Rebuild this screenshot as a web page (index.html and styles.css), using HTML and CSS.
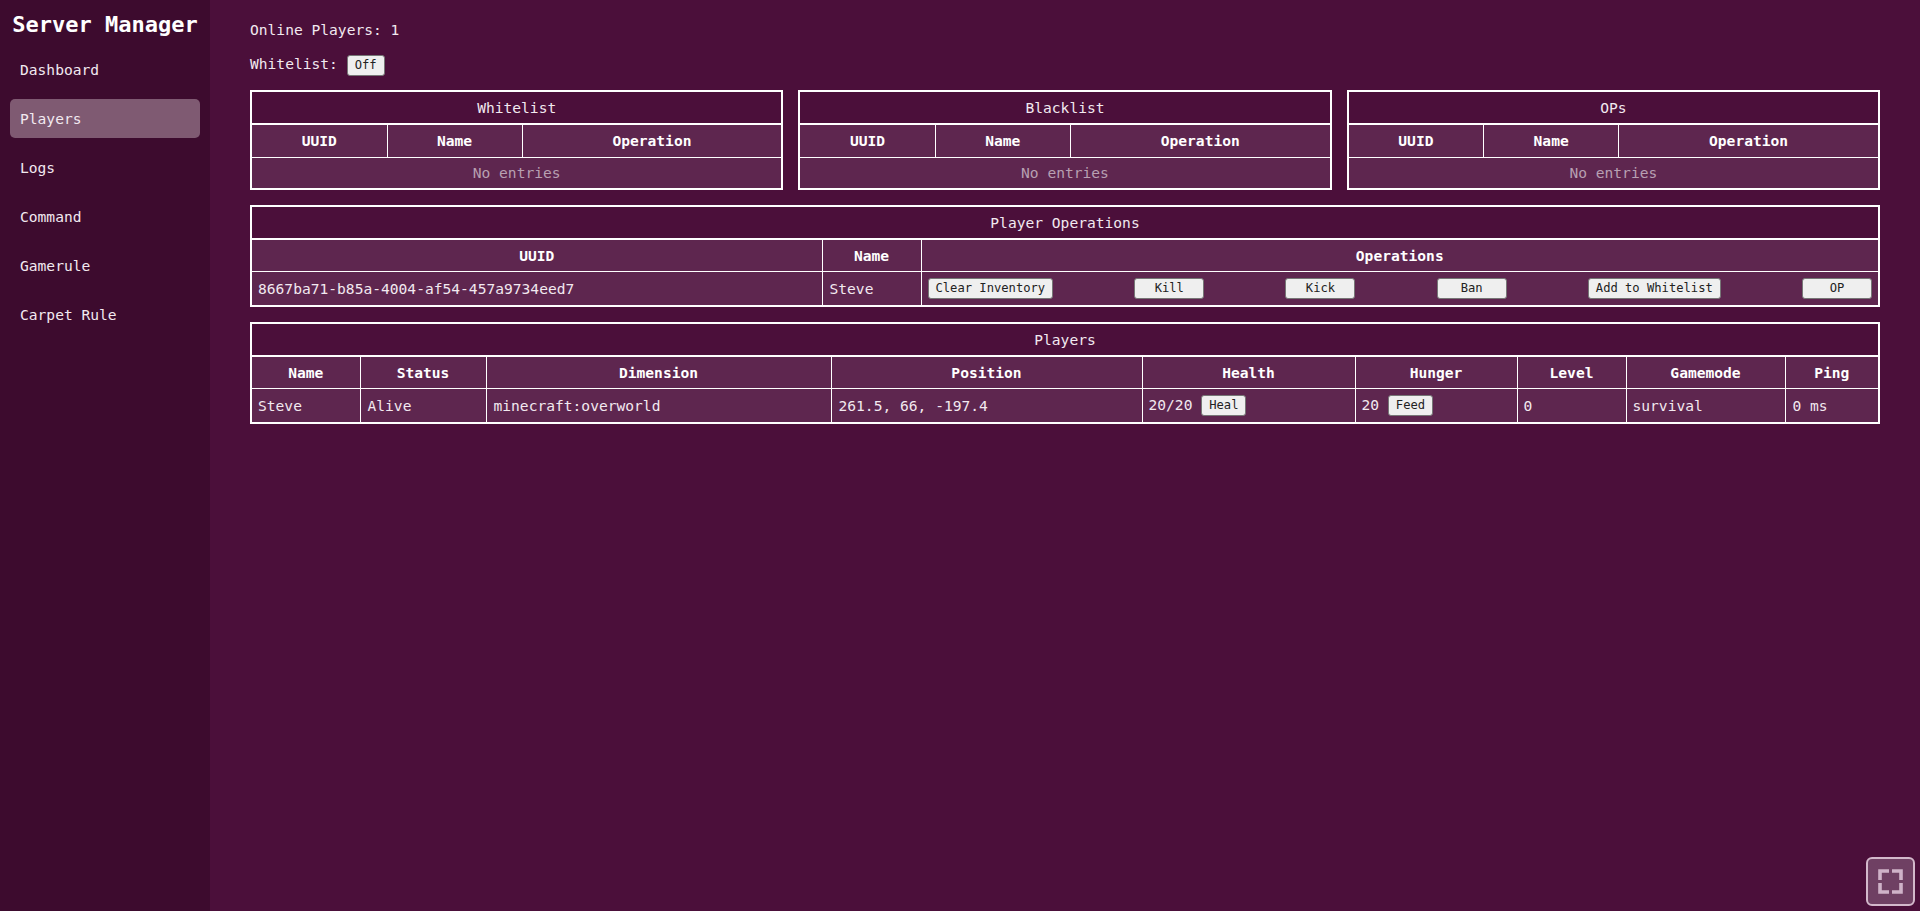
FILE: index.html
```html
<!DOCTYPE html>
<html lang="en">
<head>
<meta charset="utf-8">
<title>Server Manager</title>
<link rel="stylesheet" href="styles.css">
</head>
<body>
<aside class="sidebar">
  <h1 class="brand">Server Manager</h1>
  <nav class="nav">
    <a class="nav-item">Dashboard</a>
    <a class="nav-item active">Players</a>
    <a class="nav-item">Logs</a>
    <a class="nav-item">Command</a>
    <a class="nav-item">Gamerule</a>
    <a class="nav-item">Carpet Rule</a>
  </nav>
</aside>
<main class="main">
  <p class="line">Online Players: 1</p>
  <p class="line wl-line">Whitelist: <button class="btn">Off</button></p>
  <div class="triple">
    <table class="tbl">
      <colgroup><col class="c-uuid"><col class="c-name"><col></colgroup>
      <thead>
        <tr><th class="cap" colspan="3">Whitelist</th></tr>
        <tr><th>UUID</th><th>Name</th><th>Operation</th></tr>
      </thead>
      <tbody><tr><td class="empty" colspan="3">No entries</td></tr></tbody>
    </table>
    <table class="tbl">
      <colgroup><col class="c-uuid"><col class="c-name"><col></colgroup>
      <thead>
        <tr><th class="cap" colspan="3">Blacklist</th></tr>
        <tr><th>UUID</th><th>Name</th><th>Operation</th></tr>
      </thead>
      <tbody><tr><td class="empty" colspan="3">No entries</td></tr></tbody>
    </table>
    <table class="tbl">
      <colgroup><col class="c-uuid"><col class="c-name"><col></colgroup>
      <thead>
        <tr><th class="cap" colspan="3">OPs</th></tr>
        <tr><th>UUID</th><th>Name</th><th>Operation</th></tr>
      </thead>
      <tbody><tr><td class="empty" colspan="3">No entries</td></tr></tbody>
    </table>
  </div>
  <table class="tbl wide">
    <colgroup><col class="o-uuid"><col class="o-name"><col></colgroup>
    <thead>
      <tr><th class="cap" colspan="3">Player Operations</th></tr>
      <tr class="ops-head"><th>UUID</th><th>Name</th><th>Operations</th></tr>
    </thead>
    <tbody>
      <tr>
        <td>8667ba71-b85a-4004-af54-457a9734eed7</td>
        <td class="inner">Steve</td>
        <td class="ops-cell">
          <div class="ops">
            <button class="btn op">Clear Inventory</button>
            <button class="btn op">Kill</button>
            <button class="btn op">Kick</button>
            <button class="btn op">Ban</button>
            <button class="btn op">Add to Whitelist</button>
            <button class="btn op">OP</button>
          </div>
        </td>
      </tr>
    </tbody>
  </table>
  <table class="tbl wide">
    <colgroup><col class="p1"><col class="p2"><col class="p3"><col class="p4"><col class="p5"><col class="p6"><col class="p7"><col class="p8"><col></colgroup>
    <thead>
      <tr><th class="cap" colspan="9">Players</th></tr>
      <tr><th>Name</th><th>Status</th><th>Dimension</th><th>Position</th><th>Health</th><th>Hunger</th><th>Level</th><th>Gamemode</th><th>Ping</th></tr>
    </thead>
    <tbody>
      <tr class="player-row">
        <td>Steve</td>
        <td class="inner">Alive</td>
        <td class="inner">minecraft:overworld</td>
        <td class="inner">261.5, 66, -197.4</td>
        <td class="btn-cell">20/20 <button class="btn">Heal</button></td>
        <td class="btn-cell">20 <button class="btn">Feed</button></td>
        <td>0</td>
        <td>survival</td>
        <td class="inner">0 ms</td>
      </tr>
    </tbody>
  </table>
</main>
<button class="fullscreen" aria-label="Fullscreen">
  <svg class="fs-icon" viewBox="0 0 25 25" width="25" height="25" aria-hidden="true">
    <path d="M11 2H2V11M14 2H23V11M2 14V23H11M23 14V23H14" fill="none" stroke="currentColor" stroke-width="3.600"/>
  </svg>
</button>
</body>
</html>
```

FILE: styles.css
```css
* { box-sizing: border-box; }
html, body { height: 100%; }
body {
  margin: 0;
  display: flex;
  height: 911px;
  overflow: hidden;
  background: #4b0f3a;
  color: #f2e9f0;
  font-family: "DejaVu Sans Mono", "Liberation Mono", monospace;
  font-size: 14.6px;
  line-height: 19px;
}
.sidebar {
  flex: 0 0 210px;
  background: #3d0b2e;
  padding: 11px 10px 10px;
}
.brand {
  margin: 0 0 12px;
  font-size: 22px;
  line-height: 27px;
  font-weight: 700;
  color: #fff;
  text-align: center;
  white-space: nowrap;
}
.nav { display: flex; flex-direction: column; gap: 10px; }
.nav-item {
  display: block;
  padding: 10px;
  height: 39px;
  border-radius: 5px;
}
.nav-item.active { background: #7f5a72; }
.main {
  flex: 1;
  padding: 20px 40px;
  min-width: 0;
}
.line { margin: 0; }
.wl-line { margin: 14px 0 16px; height: 21px; line-height: 21px; white-space: pre; }
.btn {
  height: 21px;
  padding: 0 7px;
  font: 12.15px/19px "DejaVu Sans Mono", "Liberation Mono", monospace;
  color: #222;
  background: #efefef;
  border: 1px solid #767676;
  border-radius: 3px;
  vertical-align: middle;
}
.triple { display: flex; gap: 15px; margin-bottom: 15px; }
.tbl {
  width: 100%;
  table-layout: fixed;
  border-collapse: collapse;
  border: 2px solid #fff;
  background: #5e264f;
}
.triple .tbl { flex: 1 1 0; min-width: 0; }
.wide { margin-bottom: 15px; }
.tbl th, .tbl td {
  border: 1px solid #fff;
  padding: 6px;
  height: 33px;
  white-space: nowrap;
  overflow: hidden;
}
.tbl th { font-weight: 700; color: #fff; text-align: center; }
.tbl th.cap {
  font-weight: 400;
  color: #f2e9f0;
  background: #4b0f3a;
  border-bottom: 2px solid #fff;
}
.tbl .ops-head th { height: 32px; padding: 6px 6px 5px; }
.tbl .player-row td { height: 34px; }
.tbl td.inner { padding-left: 7px; }
.tbl td.empty { text-align: center; color: #b8a0b2; height: 32px; padding: 5px 6px 6px; }
.c-uuid { width: 136px; }
.c-name { width: 135px; }
.o-uuid { width: 571px; }
.o-name { width: 99px; }
.p1 { width: 109px; }
.p2 { width: 126px; }
.p3 { width: 345px; }
.p4 { width: 311px; }
.p5 { width: 213px; }
.p6 { width: 162px; }
.p7 { width: 109px; }
.p8 { width: 159px; }
.ops { display: flex; justify-content: space-between; }
.op { min-width: 70px; }
.btn-cell { white-space: pre; }
.tbl .btn-cell { padding: 5px 6px; }
.fullscreen {
  position: fixed;
  right: 5px;
  bottom: 5px;
  width: 49px;
  height: 49px;
  padding: 0;
  display: flex;
  align-items: center;
  justify-content: center;
  color: #cfb2c8;
  background: #6f4063;
  border: 2px solid #d3b8cb;
  border-radius: 6px;
}
.fs-icon { display: block; }
```
